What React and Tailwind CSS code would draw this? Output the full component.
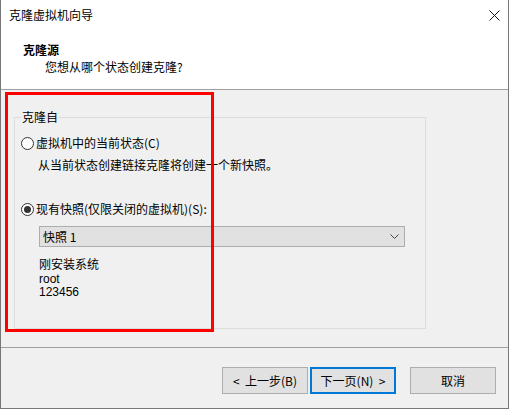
import React from 'react';

function Radio({ checked }) {
  return (
    <span className="w-[13px] h-[13px] rounded-full border border-[#333333] bg-white flex items-center justify-center shrink-0">
      {checked && <span className="w-[7px] h-[7px] rounded-full bg-[#333333]" />}
    </span>
  );
}

function Button({ children, focused }) {
  return (
    <button
      className={
        focused
          ? 'w-[86px] h-[27px] bg-[#e1e1e1] border-2 border-[#0078d7] text-[12px] leading-[16px] text-black'
          : 'w-[86px] h-[27px] bg-[#e1e1e1] border border-[#adadad] text-[12px] leading-[16px] text-black'
      }
    >
      {children}
    </button>
  );
}

export default function App() {
  return (
    <div className="relative w-[509px] h-[409px] flex flex-col bg-[#f0f0f0] border-l border-r border-b border-[#777777] text-[12px] text-black font-['Noto_Sans_CJK_SC',sans-serif]">
      {/* Header */}
      <header className="h-[90px] bg-white border-b border-[#a0a0a0] shrink-0">
        <div className="h-[30px] flex items-center justify-between">
          <span className="pl-[8px] leading-[16px]">克隆虚拟机向导</span>
          <svg width="11" height="11" viewBox="0 0 11 11" className="mr-[8px]">
            <path d="M0.5 0.5 L10.5 10.5 M10.5 0.5 L0.5 10.5" stroke="#111" strokeWidth="1" fill="none" />
          </svg>
        </div>
        <div className="mt-[11px] pl-[22px] leading-[17px] font-bold">克隆源</div>
        <div className="pl-[44px] leading-[17px]">您想从哪个状态创建克隆?</div>
      </header>

      {/* Main */}
      <main className="flex-1">
        <fieldset className="ml-[13px] mt-[19px] w-[412px] h-[220px] border border-[#dcdcdc] pl-[6px]">
          <legend className="px-[1px] leading-[16px]">克隆自</legend>
          <div className="mt-[10px] h-[16px] flex items-center gap-[2px]">
            <Radio />
            <span className="leading-[16px]">虚拟机中的当前状态(C)</span>
          </div>
          <div className="mt-[6px] pl-[17px] leading-[16px]">从当前状态创建链接克隆将创建一个新快照。</div>
          <div className="mt-[28px] h-[16px] flex items-center gap-[2px]">
            <Radio checked />
            <span className="leading-[16px]">现有快照(仅限关闭的虚拟机)(S):</span>
          </div>
          <div className="mt-[9px] ml-[18px] w-[366px] h-[21px] bg-[#e1e1e1] border border-[#adadad] flex items-center justify-between pl-[3px] pr-[5px]">
            <span className="leading-[16px]">快照 1</span>
            <svg width="9" height="6" viewBox="0 0 9 6">
              <path d="M0.5 0.5 L4.5 4.5 L8.5 0.5" stroke="#444" strokeWidth="1" fill="none" />
            </svg>
          </div>
          <div className="mt-[9px] pl-[18px]">
            <div className="leading-[15px]">刚安装系统</div>
            <div className="mt-[2px] leading-[13px] font-['Liberation_Sans',sans-serif]">root</div>
            <div className="leading-[13px] font-['Liberation_Sans',sans-serif]">123456</div>
          </div>
        </fieldset>
      </main>

      {/* Footer buttons */}
      <footer className="h-[61px] shrink-0 border-t border-[#a0a0a0] flex items-start justify-end pt-[19px] pr-[12px]">
        <Button>&lt;&nbsp; 上一步(B)</Button>
        <div className="ml-[2px]">
          <Button focused>下一页(N)&nbsp; &gt;</Button>
        </div>
        <div className="ml-[14px]">
          <Button>取消</Button>
        </div>
      </footer>

      {/* Red annotation box */}
      <div className="absolute left-[4px] top-[92px] w-[209px] h-[240px] border-[3px] border-[#ff0000]" />
    </div>
  );
}
